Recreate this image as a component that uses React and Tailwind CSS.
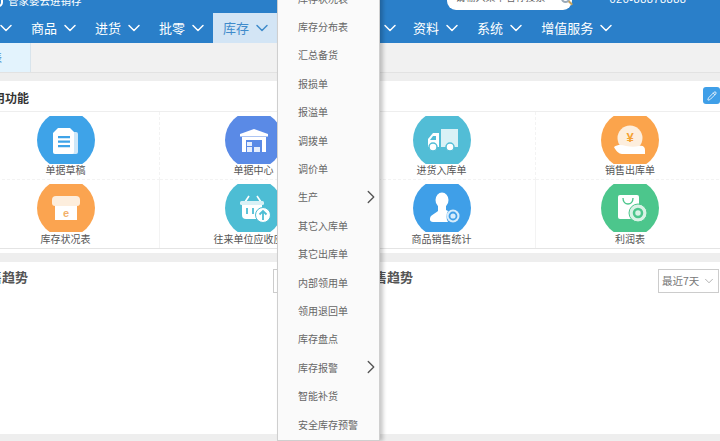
import React from 'react';
import { ChevronDown, ChevronRight, Pencil } from 'lucide-react';

const navItems = ['基础', '商品', '进货', '批零', '库存', '财务', '报表', '资料', '系统', '增值服务'];

const menuItems = [
  { label: '库存状况表' },
  { label: '库存分布表' },
  { label: '汇总备货' },
  { label: '报损单' },
  { label: '报溢单' },
  { label: '调拨单' },
  { label: '调价单' },
  { label: '生产', more: true },
  { label: '其它入库单' },
  { label: '其它出库单' },
  { label: '内部领用单' },
  { label: '领用退回单' },
  { label: '库存盘点' },
  { label: '库存报警', more: true },
  { label: '智能补货' },
  { label: '安全库存预警' },
];

function DraftIcon() {
  return (
    <svg viewBox="0 0 58 58" className="w-full h-full">
      <path d="M36 21h3a2 2 0 0 1 2 2v18a2 2 0 0 1-2 2h-5z" fill="#cfe8f9" />
      <path d="M21 17h12l4 4v20a2 2 0 0 1-2 2H18a2 2 0 0 1-2-2V22z" fill="#fff" />
      <path d="M21 25h12v2.200H21zM21 29.500h12v2.200H21zM21 34h12v2.200H21z" fill="#3ea3e8" />
    </svg>
  );
}

function WarehouseIcon() {
  return (
    <svg viewBox="0 0 58 58" className="w-full h-full">
      <path d="M29 18l14 5v2.500H15V23z" fill="#fff" />
      <path d="M17 26h24v15H17z" fill="#fff" />
      <path d="M21 29h16v12H21z" fill="#5a8ae6" />
      <path d="M22 31h5v4h-5zM22 36h5v5h-5zM29 36h6v5h-6z" fill="#e6eefc" />
    </svg>
  );
}

function TruckIcon() {
  return (
    <svg viewBox="0 0 58 58" className="w-full h-full">
      <path d="M28 18h17v18H28z" fill="#d9f1f6" />
      <path d="M26 22h-6l-5 6v8h11z" fill="#fff" />
      <path d="M20 25h3v4h-6z" fill="#52bdd6" />
      <circle cx="20" cy="36" r="4" fill="#fff" stroke="#52bdd6" strokeWidth="1.500" />
      <circle cx="37" cy="36" r="4" fill="#fff" stroke="#52bdd6" strokeWidth="1.500" />
    </svg>
  );
}

function YuanIcon() {
  return (
    <svg viewBox="0 0 58 58" className="w-full h-full">
      <circle cx="29" cy="27" r="12.500" fill="#fdeedd" />
      <path d="M13 36c4-3 8-2 12-1 5 1 9 1 13 0 4-1 6 1 6 4v4H21c-3 0-6-3-8-7z" fill="#fff" />
      <text x="29" y="31" textAnchor="middle" fontSize="13" fontWeight="700" fill="#f5a132" fontFamily="Liberation Sans, sans-serif">¥</text>
    </svg>
  );
}

function StoreIcon() {
  return (
    <svg viewBox="0 0 58 58" className="w-full h-full">
      <path d="M18 24h22v17H18z" fill="#fff" />
      <path d="M19 17h20a4 4 0 0 1 4 4v3a3 3 0 0 1-3 3H18a3 3 0 0 1-3-3v-3a4 4 0 0 1 4-4z" fill="#fdeedd" />
      <text x="29" y="38" textAnchor="middle" fontSize="11" fontWeight="700" fill="#f2b06a" fontFamily="Liberation Sans, sans-serif">e</text>
    </svg>
  );
}

function BasketIcon() {
  return (
    <svg viewBox="0 0 58 58" className="w-full h-full">
      <path d="M20 23l4-6M36 23l-4-6" stroke="#fff" strokeWidth="1.600" fill="none" />
      <rect x="15" y="22" width="24" height="4" rx="1.500" fill="#d9f1f6" />
      <path d="M17 26h20v10a4 4 0 0 1-4 4H21a4 4 0 0 1-4-4z" fill="#fff" />
      <path d="M22 29v6M28 29v6" stroke="#4dbdd4" strokeWidth="1.800" />
      <circle cx="38" cy="36" r="7.500" fill="#fff" stroke="#4dbdd4" strokeWidth="1" />
      <path d="M38 41v-9M34.500 35.500l3.500-3.500 3.500 3.500" stroke="#4dbdd4" strokeWidth="1.800" fill="none" />
    </svg>
  );
}

function PersonIcon() {
  return (
    <svg viewBox="0 0 58 58" className="w-full h-full">
      <ellipse cx="29" cy="21" rx="6.500" ry="7.500" fill="#fff" />
      <path d="M25 27h8v4l2 1c-2 3-2 8 0 11H20c-3 0-4-3-2-6 2-2 5-3 7-5z" fill="#fff" />
      <circle cx="40" cy="37" r="6.500" fill="#d7ecfb" />
      <circle cx="40" cy="37" r="3.500" fill="none" stroke="#3f9fe8" strokeWidth="1.800" />
    </svg>
  );
}

function BagIcon() {
  return (
    <svg viewBox="0 0 58 58" className="w-full h-full">
      <path d="M19 16h17a2 2 0 0 1 2 2v22H19a2 2 0 0 1-2-2V18a2 2 0 0 1 2-2z" fill="#fff" />
      <path d="M22 19c0 8 10 8 10 0" stroke="#4cc68c" strokeWidth="1.400" fill="none" />
      <circle cx="37" cy="34" r="9" fill="#d8f2e5" stroke="#4cc68c" strokeWidth="1" />
      <circle cx="37" cy="34" r="4" fill="none" stroke="#4cc68c" strokeWidth="2.500" />
    </svg>
  );
}

const shortcuts = [
  { label: '单据草稿', color: 'bg-[#3ea3e8]', icon: <DraftIcon /> },
  { label: '单据中心', color: 'bg-[#5a8ae6]', icon: <WarehouseIcon /> },
  { label: '进货入库单', color: 'bg-[#52bdd6]', icon: <TruckIcon /> },
  { label: '销售出库单', color: 'bg-[#fba44c]', icon: <YuanIcon /> },
  { label: '库存状况表', color: 'bg-[#fba450]', icon: <StoreIcon /> },
  { label: '往来单位应收应付', color: 'bg-[#4dbdd4]', icon: <BasketIcon /> },
  { label: '商品销售统计', color: 'bg-[#3f9fe8]', icon: <PersonIcon /> },
  { label: '利润表', color: 'bg-[#4cc68c]', icon: <BagIcon /> },
];

function TrendPanel() {
  return (
    <div className="w-[384px] shrink-0 flex justify-between items-start pt-[7px]">
      <h2 className="text-[13px] leading-[20px] -mt-[2px] font-bold text-[#555]">商品销售趋势</h2>
      <div className="w-[61px] h-[24px] border border-[#ccc] flex items-center justify-between pl-[3px] pr-[2px] text-[10.500px] text-[#777] bg-white">
        <span>最近7天</span>
        <ChevronDown size={14} strokeWidth={1.100} className="text-[#888]" />
      </div>
    </div>
  );
}

export default function App() {
  return (
    <div
      className="relative w-[720px] h-[441px] overflow-hidden bg-[#eeeeee]"
      style={{ fontFamily: '"Noto Sans CJK SC", "Liberation Sans", sans-serif' }}
    >
      {/* top strip, scrolled mostly out of view */}
      <div className="h-[13px] bg-[#2a7fc9] flex items-end overflow-hidden text-white">
        <div className="w-[5px] h-[14px] mb-[6px] -ml-[6px] rounded-full border-2 border-white box-content" />
        <span className="ml-[5px] mb-[5px] text-[10.500px] leading-[14px] whitespace-nowrap">管家婆云进销存</span>
        <div className="ml-[365px] mb-[3px] w-[125px] h-[24px] shrink-0 bg-white rounded-[9px] flex items-center justify-between pl-[9px] pr-[2px] text-[10px] text-[#666]">
          <span className="whitespace-nowrap -mt-[3px]">请输入菜单名称搜索</span>
          <div className="relative w-[9px] h-[9px] -mb-[1px] rounded-full border-2 border-[#9aa9b8]">
            <div className="absolute left-[5px] top-[6px] w-[5px] h-[2px] rotate-45 bg-[#c9a35a]" />
          </div>
        </div>
        <span className="ml-[38px] mb-[7px] text-[11px] leading-[14px] tracking-[0.500px] whitespace-nowrap" style={{ fontFamily: '"Liberation Sans", sans-serif' }}>
          020-88878888
        </span>
      </div>

      {/* main nav */}
      <nav className="h-[30px] bg-[#2a7fc9] flex -ml-[43px] text-white">
        {navItems.map((item) => (
          <div
            key={item}
            className={`h-full shrink-0 flex items-center gap-[8px] px-[10px] text-[13px] ${item === '库存' ? 'bg-[#d3e5f5] text-[#3f8bcb]' : ''} ${item === '报表' ? 'w-[62px]' : 'min-w-[64px]'}`}
          >
            <span className="whitespace-nowrap">{item}</span>
            <ChevronDown size={20} strokeWidth={1.800} className="shrink-0 -mx-[5px]" />
          </div>
        ))}
      </nav>

      {/* open tabs */}
      <div className="h-[30px] bg-[#f1f1f1] border-b border-[#e2e2e2] flex">
        <div className="w-[32px] h-full bg-[#e3f3fd] border-r border-[#d8e4ec] flex items-center -ml-[1px] text-[11px] text-[#3f8bcb] overflow-hidden">
          <span className="-ml-[8px]">表</span>
        </div>
      </div>

      {/* common functions */}
      <section className="mt-[8px] h-[168px] bg-white border-b border-[#e4e4e4]">
        <div className="h-[31px] flex items-center justify-between border-b border-[#eeeeee]">
          <h2 className="-ml-[19px] mt-[3px] text-[12px] font-bold text-[#333] whitespace-nowrap">常用功能</h2>
          <div className="w-[17px] h-[17px] mb-[1px] rounded-[3px] bg-[#3f9fe8] flex items-center justify-center text-white">
            <Pencil size={10} strokeWidth={2} />
          </div>
        </div>
        <div className="grid grid-cols-4 w-[752px] -ml-[28px]">
          {shortcuts.map((item, i) => (
            <div
              key={item.label}
              className={`h-[68px] pt-[4px] flex flex-col items-center border-[#f3f3f3] ${i < 4 ? 'border-b border-dashed' : ''} ${i % 4 !== 3 ? 'border-r' : ''}`}
            >
              <div className="w-[58px] h-[48px] overflow-hidden flex items-center justify-center shrink-0">
                <div className={`w-[58px] h-[58px] rounded-full shrink-0 ${item.color}`}>{item.icon}</div>
              </div>
              <span className={`text-[10px] leading-[14px] text-[#555] whitespace-nowrap ${i < 4 ? '-mt-[1px]' : ''}`}>{item.label}</span>
            </div>
          ))}
        </div>
      </section>

      {/* white gap above the grey band */}
      <div className="h-[4px] bg-white" />

      {/* sales trends */}
      <section className="mt-[9px] h-[172px] bg-white flex -ml-[50px] gap-px">
        <TrendPanel />
        <TrendPanel />
      </section>

      {/* dropdown of the stock menu */}
      <div className="absolute left-[277px] top-[-17px] w-[103px] pb-[2px] bg-[#fafafa] border border-[#cfcfcf] shadow-[3px_0_4px_rgba(0,0,0,0.22)]">
        {menuItems.map((item) => (
          <div key={item.label} className="h-[28.400px] flex items-center justify-between pl-[20px] text-[10px] text-[#666]">
            <span className="whitespace-nowrap">{item.label}</span>
            {item.more && <ChevronRight size={22} strokeWidth={1.500} className="text-[#555] -mr-[3px]" />}
          </div>
        ))}
      </div>
    </div>
  );
}
